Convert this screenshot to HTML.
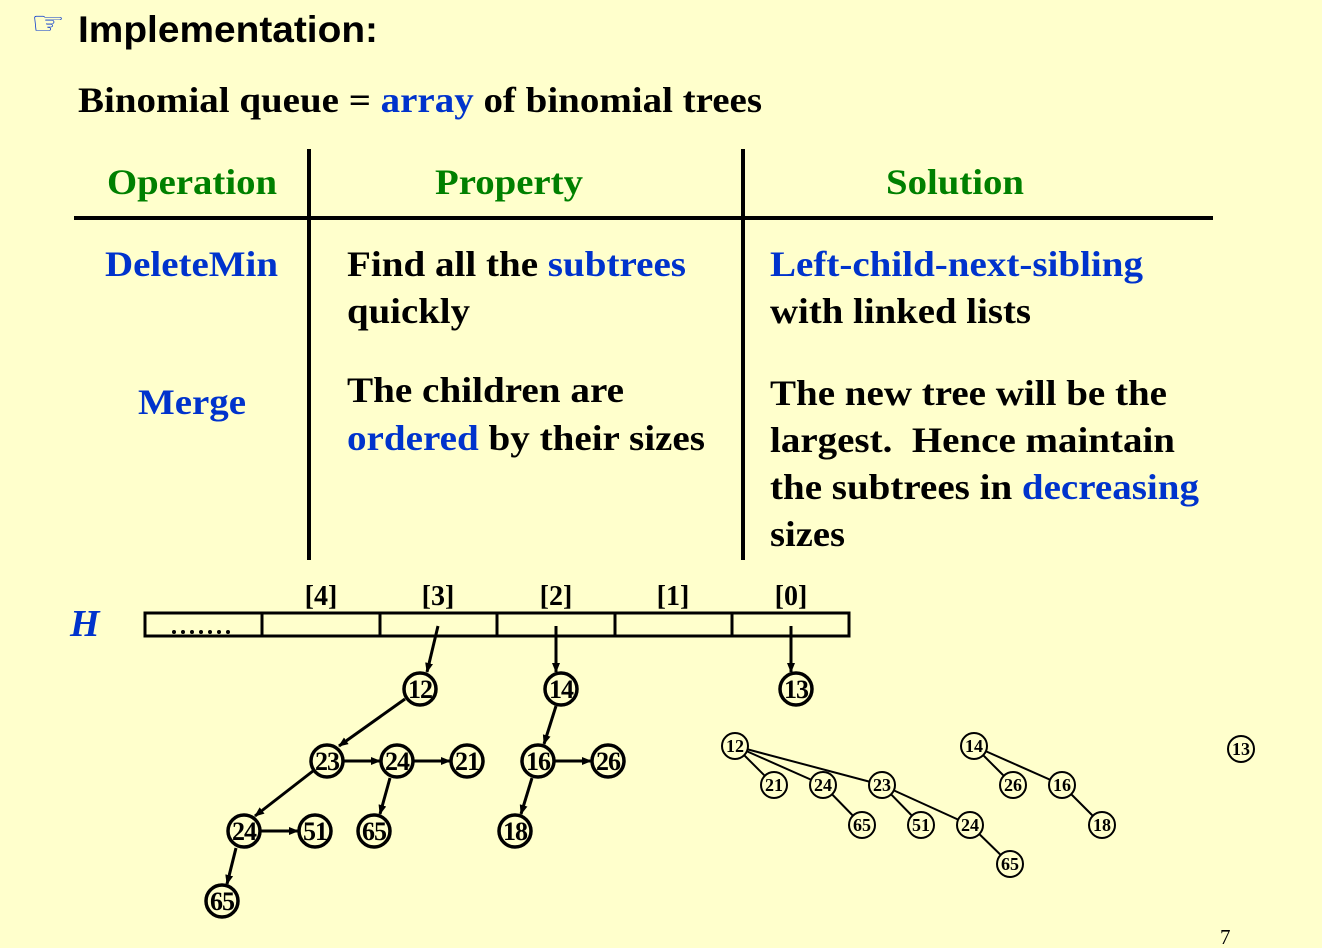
<!DOCTYPE html>
<html><head><meta charset="utf-8"><style>
html,body{margin:0;padding:0;background:#FFFFCC;}
svg{display:block}
.t{font-family:"Liberation Serif",serif;font-weight:bold;}
.b{fill:#0033CC}
.g{fill:#008000}
</style></head><body>
<svg width="1322" height="948" viewBox="0 0 1322 948" xmlns="http://www.w3.org/2000/svg">
<rect width="1322" height="948" fill="#FFFFCC"/>
<text x="31" y="34" font-family="DejaVu Sans,sans-serif" font-size="32" fill="#0033CC" textLength="34" lengthAdjust="spacingAndGlyphs">☞</text>
<text x="78" y="42" font-family="Liberation Sans,sans-serif" font-weight="bold" font-size="37" textLength="300" lengthAdjust="spacingAndGlyphs">Implementation:</text>
<text class="t" x="78" y="112" font-size="36" textLength="684" lengthAdjust="spacingAndGlyphs">Binomial queue = <tspan class="b">array</tspan> of binomial trees</text>

<g class="t" font-size="36">
<text class="g" x="107" y="194" textLength="170" lengthAdjust="spacingAndGlyphs">Operation</text>
<text class="g" x="435" y="194" textLength="148" lengthAdjust="spacingAndGlyphs">Property</text>
<text class="g" x="886" y="194" textLength="138" lengthAdjust="spacingAndGlyphs">Solution</text>
<text class="b" x="105" y="276" textLength="173" lengthAdjust="spacingAndGlyphs">DeleteMin</text>
<text class="b" x="138" y="414" textLength="108" lengthAdjust="spacingAndGlyphs">Merge</text>
<text x="347" y="276" textLength="339" lengthAdjust="spacingAndGlyphs">Find all the <tspan class="b">subtrees</tspan></text>
<text x="347" y="323" textLength="123" lengthAdjust="spacingAndGlyphs">quickly</text>
<text x="347" y="402" textLength="277" lengthAdjust="spacingAndGlyphs">The children are</text>
<text x="347" y="450" textLength="358" lengthAdjust="spacingAndGlyphs"><tspan class="b">ordered</tspan> by their sizes</text>
<text class="b" x="770" y="276" textLength="373" lengthAdjust="spacingAndGlyphs">Left-child-next-sibling</text>
<text x="770" y="323" textLength="261" lengthAdjust="spacingAndGlyphs">with linked lists</text>
<text x="770" y="405" textLength="397" lengthAdjust="spacingAndGlyphs">The new tree will be the</text>
<text x="770" y="452" textLength="405" lengthAdjust="spacingAndGlyphs" xml:space="preserve">largest.  Hence maintain</text>
<text x="770" y="499" textLength="429" lengthAdjust="spacingAndGlyphs">the subtrees in <tspan class="b">decreasing</tspan></text>
<text x="770" y="546" textLength="75" lengthAdjust="spacingAndGlyphs">sizes</text>
</g>
<g stroke="#000" stroke-width="4">
<line x1="74" y1="218" x2="1213" y2="218"/>
<line x1="309" y1="149" x2="309" y2="560"/>
<line x1="743" y1="149" x2="743" y2="560"/>
</g>

<text x="70" y="636" font-family="Liberation Serif,serif" font-weight="bold" font-style="italic" font-size="38" fill="#0033CC">H</text>
<g class="t" font-size="28" text-anchor="middle">
<text x="321" y="605">[4]</text><text x="438" y="605">[3]</text><text x="556" y="605">[2]</text><text x="673" y="605">[1]</text><text x="791" y="605">[0]</text>
</g>
<g fill="#000">
<circle cx="174" cy="632" r="2"/><circle cx="183" cy="632" r="2"/><circle cx="192" cy="632" r="2"/><circle cx="201" cy="632" r="2"/><circle cx="210" cy="632" r="2"/><circle cx="219" cy="632" r="2"/><circle cx="228" cy="632" r="2"/>
</g>
<g stroke="#000" stroke-width="3" fill="none">
<rect x="145" y="613" width="704" height="23"/>
<line x1="262" y1="613" x2="262" y2="636"/><line x1="380" y1="613" x2="380" y2="636"/><line x1="497" y1="613" x2="497" y2="636"/><line x1="615" y1="613" x2="615" y2="636"/><line x1="732" y1="613" x2="732" y2="636"/>
</g>
<defs><marker id="a" markerWidth="10" markerHeight="8" refX="9" refY="4" orient="auto" markerUnits="userSpaceOnUse"><path d="M0,0L10,4L0,8z" fill="#000"/></marker></defs>
<g stroke="#000" stroke-width="3" marker-end="url(#a)">
<line x1="438" y1="626" x2="427" y2="672"/>
<line x1="556" y1="626" x2="556" y2="672"/>
<line x1="791" y1="626" x2="791" y2="672"/>
<line x1="405" y1="699" x2="339" y2="746"/>
<line x1="344" y1="761" x2="380" y2="761"/>
<line x1="414" y1="761" x2="450" y2="761"/>
<line x1="313" y1="771" x2="255" y2="816"/>
<line x1="390" y1="778" x2="380" y2="814"/>
<line x1="261" y1="831" x2="298" y2="831"/>
<line x1="236" y1="848" x2="227" y2="884"/>
<line x1="556" y1="706" x2="544" y2="744"/>
<line x1="555" y1="761" x2="591" y2="761"/>
<line x1="532" y1="778" x2="521" y2="814"/>
</g>
<g stroke="#000" stroke-width="3.5" fill="#FFFFCC">
<circle cx="420" cy="689" r="16"/><circle cx="561" cy="689" r="16"/><circle cx="796" cy="689" r="16"/>
<circle cx="327" cy="761" r="16"/><circle cx="397" cy="761" r="16"/><circle cx="467" cy="761" r="16"/>
<circle cx="538" cy="761" r="16"/><circle cx="608" cy="761" r="16"/>
<circle cx="244" cy="831" r="16"/><circle cx="315" cy="831" r="16"/><circle cx="374" cy="831" r="16"/><circle cx="515" cy="831" r="16"/>
<circle cx="222" cy="901" r="16"/>
</g>
<g class="t" font-size="26" text-anchor="middle" letter-spacing="-1">
<text x="420" y="698">12</text><text x="561" y="698">14</text><text x="796" y="698">13</text>
<text x="327" y="770">23</text><text x="397" y="770">24</text><text x="467" y="770">21</text>
<text x="538" y="770">16</text><text x="608" y="770">26</text>
<text x="244" y="840">24</text><text x="315" y="840">51</text><text x="374" y="840">65</text><text x="515" y="840">18</text>
<text x="222" y="910">65</text>
</g>

<g stroke="#000" stroke-width="2">
<line x1="735" y1="746" x2="774" y2="785"/><line x1="735" y1="746" x2="823" y2="785"/><line x1="735" y1="746" x2="882" y2="785"/>
<line x1="823" y1="785" x2="862" y2="825"/><line x1="882" y1="785" x2="921" y2="825"/><line x1="882" y1="785" x2="970" y2="825"/>
<line x1="970" y1="825" x2="1010" y2="864"/>
<line x1="974" y1="746" x2="1013" y2="785"/><line x1="974" y1="746" x2="1062" y2="785"/><line x1="1062" y1="785" x2="1102" y2="825"/>
</g>
<g stroke="#000" stroke-width="2" fill="#FFFFCC">
<circle cx="735" cy="746" r="13"/><circle cx="774" cy="785" r="13"/><circle cx="823" cy="785" r="13"/><circle cx="882" cy="785" r="13"/>
<circle cx="862" cy="825" r="13"/><circle cx="921" cy="825" r="13"/><circle cx="970" cy="825" r="13"/><circle cx="1010" cy="864" r="13"/>
<circle cx="974" cy="746" r="13"/><circle cx="1013" cy="785" r="13"/><circle cx="1062" cy="785" r="13"/><circle cx="1102" cy="825" r="13"/>
<circle cx="1241" cy="749" r="13"/>
</g>
<g class="t" font-size="18" text-anchor="middle">
<text x="735" y="752">12</text><text x="774" y="791">21</text><text x="823" y="791">24</text><text x="882" y="791">23</text>
<text x="862" y="831">65</text><text x="921" y="831">51</text><text x="970" y="831">24</text><text x="1010" y="870">65</text>
<text x="974" y="752">14</text><text x="1013" y="791">26</text><text x="1062" y="791">16</text><text x="1102" y="831">18</text>
<text x="1241" y="755">13</text>
</g>
<text x="1220" y="944" font-family="Liberation Serif,serif" font-size="21">7</text>
</svg>
</body></html>
